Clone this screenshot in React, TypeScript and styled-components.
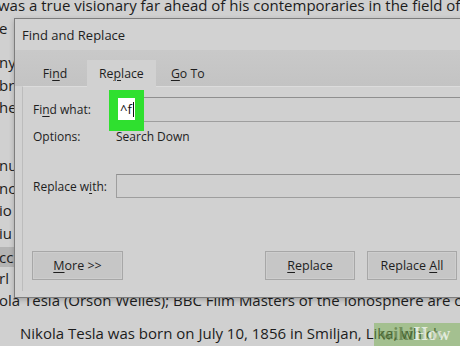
import React from "react";
import styled, { createGlobalStyle } from "styled-components";

const GlobalStyle = createGlobalStyle`
  html, body { margin: 0; padding: 0; }
  body {
    width: 460px;
    height: 346px;
    overflow: hidden;
    background: #d0d0d0;
    font-family: "Open Sans", "Noto Sans", sans-serif;
    color: #1d1d1d;
  }
`;

const Screen = styled.div`
  position: relative;
  width: 460px;
  height: 346px;
  overflow: hidden;
  background: #d0d0d0;
`;

const Doc = styled.div`
  margin-top: -6px;
  font-size: 15px;
  line-height: 22.5px;
  color: #1c1c1c;
`;

const Para = styled.div<{ $after?: number }>`
  margin-bottom: ${(p) => p.$after ?? 0}px;
`;

const Line = styled.div<{ $x?: number }>`
  white-space: nowrap;
  margin-left: ${(p) => p.$x ?? -1}px;
`;

const Marked = styled.span`
  display: inline-block;
  height: 20px;
  line-height: 20px;
  padding-right: 40px;
  background: #b4b4b4;
  vertical-align: middle;
`;

const Dialog = styled.div`
  position: absolute;
  left: 14px;
  top: 18px;
  width: 470px;
  height: 280px;
  box-sizing: border-box;
  background: #d2d2d2;
  border: 1px solid #7d7d7d;
  box-shadow: 0 2px 5px rgba(0, 0, 0, 0.22);
  display: flex;
  flex-direction: column;
  font-size: 12px;
  color: #1e1e1e;
`;

const TitleBar = styled.div`
  height: 31px;
  display: flex;
  align-items: center;
  padding-left: 7px;
  font-size: 13px;
`;

const TabStrip = styled.div`
  height: 36px;
  box-sizing: border-box;
  display: flex;
  align-items: flex-end;
  padding-left: 8px;
  background: linear-gradient(#c9c9c9, #c3c3c3);
`;

const Tab = styled.div<{ $active?: boolean }>`
  min-width: 64px;
  box-sizing: border-box;
  padding: 0 12px;
  display: flex;
  align-items: center;
  justify-content: center;
  background: ${(p) => (p.$active ? "#d1d1d1" : "transparent")};
  position: relative;
  z-index: 1;
  margin-bottom: ${(p) => (p.$active ? "-1px" : "0")};
  height: ${(p) => (p.$active ? "27px" : "26px")};
  font-size: 12.3px;
`;

const Key = styled.span`
  text-decoration: underline;
  text-underline-offset: 2px;
  text-decoration-thickness: 1px;
`;

const Panel = styled.div`
  flex: 1;
  margin: 0 0 6px 7px;
  background: #d1d1d1;
  border-top: 1px solid #dcdcdc;
  border-left: 1px solid #bcbcbc;
  padding: 10px 0 0 10px;
  display: flex;
  flex-direction: column;
`;

const Row = styled.div<{ $top?: number; $h?: number }>`
  display: grid;
  grid-template-columns: 83px 1fr;
  align-items: center;
  margin-top: ${(p) => p.$top ?? 0}px;
  height: ${(p) => p.$h ?? 25}px;
  white-space: nowrap;
`;

const Field = styled.div`
  position: relative;
  height: 100%;
  box-sizing: border-box;
  border: 1px solid #9e9e9e;
  border-top-color: #8f8f8f;
  background: #d0d0d0;
`;

const Annotation = styled.div`
  position: absolute;
  left: -8px;
  top: -8px;
  box-sizing: border-box;
  width: 35px;
  height: 41px;
  padding: 8px 0 0 9px;
  background: #2fe02f;
`;

const TypedText = styled.div`
  width: 17px;
  height: 22px;
  background: #ffffff;
  display: flex;
  align-items: center;
  padding-left: 2px;
  box-sizing: border-box;
  font-size: 13px;
  color: #111;
`;

const Caret = styled.span`
  display: inline-block;
  width: 1px;
  height: 15px;
  background: #111;
  margin-left: 1px;
`;

const ButtonRow = styled.div`
  margin-top: 53px;
  margin-left: -1px;
  width: 425px;
  display: flex;
  justify-content: space-between;
`;

const ButtonGroup = styled.div`
  display: flex;
  gap: 12px;
`;

const Button = styled.div<{ $w?: number }>`
  width: ${(p) => p.$w ?? 90}px;
  height: 29px;
  box-sizing: border-box;
  display: flex;
  align-items: center;
  justify-content: center;
  background: #c6c6c6;
  border: 1px solid #a7a7a7;
  box-shadow: inset 0 0 0 1px #cdcdcd;
  font-size: 12.5px;
`;

const Watermark = styled.div`
  position: absolute;
  right: 0;
  bottom: 0;
  width: 86px;
  height: 23px;
  background: rgba(120, 175, 80, 0.5);
  display: flex;
  align-items: center;
  padding-left: 6px;
  box-sizing: border-box;
  font-family: "Liberation Serif", serif;
  font-weight: bold;
  font-size: 18px;
  letter-spacing: 0.2px;
`;

const WikiPart = styled.span`
  color: rgba(70, 100, 45, 0.55);
`;

const HowPart = styled.span`
  color: rgba(255, 255, 255, 0.7);
`;

export default function App() {
  return (
    <Screen>
      <GlobalStyle />
      <Doc>
        <Para $after={12}>
          <Line $x={-2}>was a true visionary far ahead of his contemporaries in the field of</Line>
          <Line>e</Line>
        </Para>
        <Para $after={35.5}>
          <Line>ny</Line>
          <Line>br</Line>
          <Line>he</Line>
        </Para>
        <Para $after={10.5}>
          <Line>nu</Line>
          <Line>nc</Line>
          <Line>io</Line>
          <Line>iu</Line>
          <Line>
            <Marked>cc</Marked>
          </Line>
          <Line>rl</Line>
          <Line>ola Tesla (Orson Welles); BBC Film Masters of the Ionosphere are o</Line>
        </Para>
        <Para>
          <Line $x={20}>Nikola Tesla was born on July 10, 1856 in Smiljan, Lika, which</Line>
        </Para>
      </Doc>

      <Dialog>
        <TitleBar>Find and Replace</TitleBar>
        <TabStrip>
          <Tab>
            Fi<Key>n</Key>d
          </Tab>
          <Tab $active>
            Re<Key>p</Key>lace
          </Tab>
          <Tab>
            <Key>G</Key>o To
          </Tab>
        </TabStrip>
        <Panel>
          <Row>
            <span>
              Fi<Key>n</Key>d what:
            </span>
            <Field>
              <Annotation>
                <TypedText>
                  ^f
                  <Caret />
                </TypedText>
              </Annotation>
            </Field>
          </Row>
          <Row $top={2} $h={24}>
            <span>Options:</span>
            <span>Search Down</span>
          </Row>
          <Row $top={26} $h={24}>
            <span>
              Replace w<Key>i</Key>th:
            </span>
            <Field />
          </Row>
          <ButtonRow>
            <Button $w={91}>
              <span>
                <Key>M</Key>ore &gt;&gt;
              </span>
            </Button>
            <ButtonGroup>
              <Button>
                <span>
                  <Key>R</Key>eplace
                </span>
              </Button>
              <Button>
                <span>
                  Replace <Key>A</Key>ll
                </span>
              </Button>
            </ButtonGroup>
          </ButtonRow>
        </Panel>
      </Dialog>

      <Watermark>
        <WikiPart>wiki</WikiPart>
        <HowPart>How</HowPart>
      </Watermark>
    </Screen>
  );
}
